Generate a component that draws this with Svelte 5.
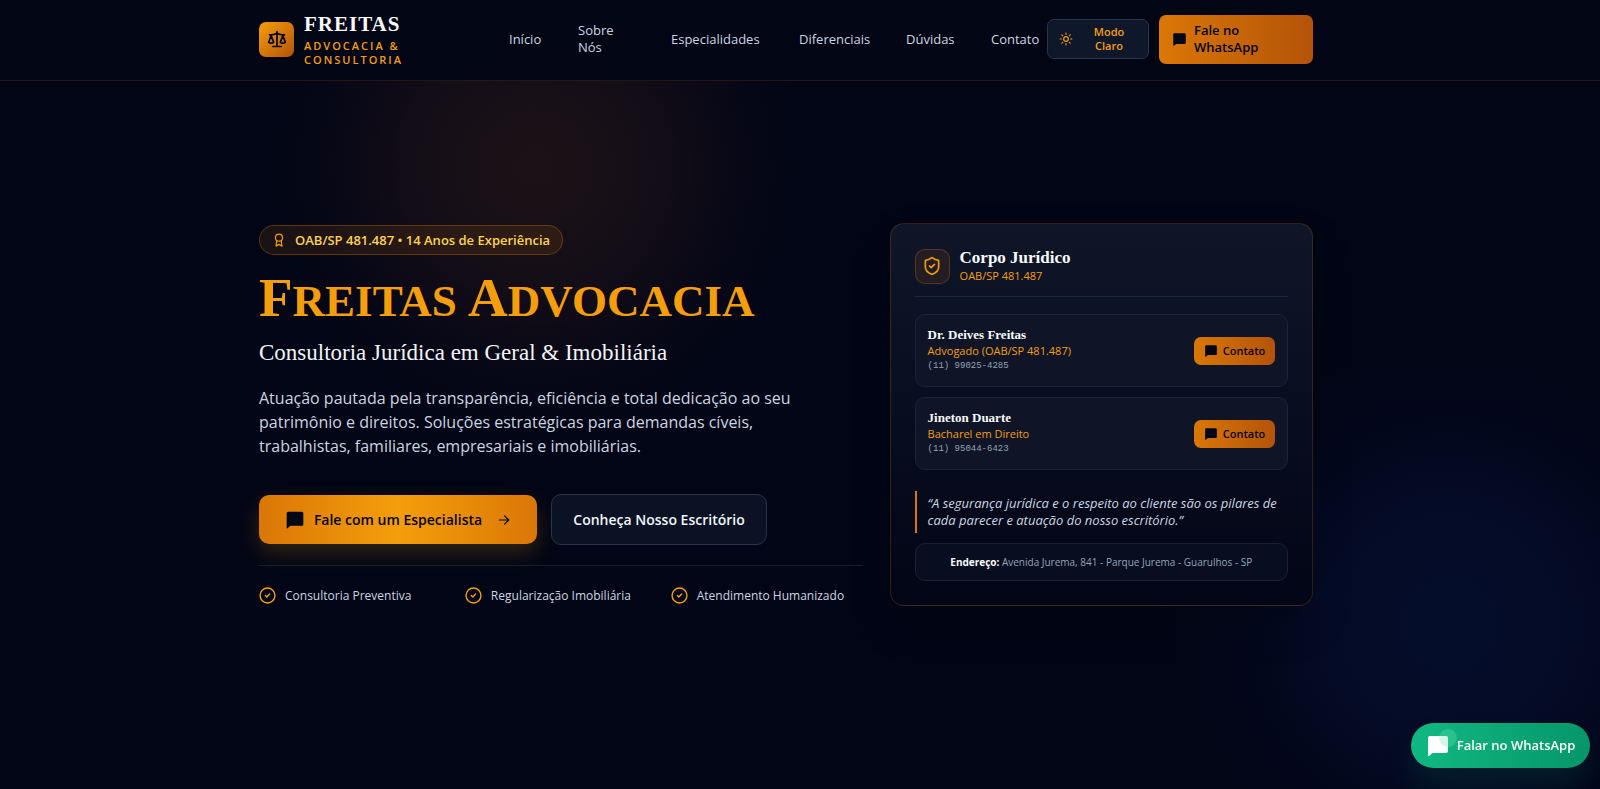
<script>
  const nav = [
    ['Início', '#inicio'],
    ['Sobre Nós', '#sobre'],
    ['Especialidades', '#especialidades'],
    ['Diferenciais', '#diferenciais'],
    ['Dúvidas', '#duvidas'],
    ['Contato', '#contato'],
  ];
  const features = ['Consultoria Preventiva', 'Regularização Imobiliária', 'Atendimento Humanizado'];
  const team = [
    { name: 'Dr. Deives Freitas', role: 'Advogado (OAB/SP 481.487)', phone: '(11) 99025-4285' },
    { name: 'Jineton Duarte', role: 'Bacharel em Direito', phone: '(11) 95044-6423' },
  ];
</script>

{#snippet chat(size)}
  <svg width={size} height={size} viewBox="0 0 24 24" fill="currentColor" aria-hidden="true">
    <path d="M20 2H4c-1.100 0-2 .9-2 2v17.500c0 .6.7.9 1.100.5L6.500 19H20c1.100 0 2-.9 2-2V4c0-1.100-.9-2-2-2z" />
  </svg>
{/snippet}

<div class="page">
  <div class="glow warm"></div>
  <div class="glow cool"></div>

  <header>
    <div class="wrap bar">
      <a class="brand" href="#inicio">
        <span class="mark">
          <svg width="20" height="20" viewBox="0 0 24 24" fill="none" stroke="currentColor" stroke-width="2" stroke-linecap="round" stroke-linejoin="round" aria-hidden="true">
            <path d="m16 16 3-8 3 8c-.87.65-1.920 1-3 1s-2.130-.35-3-1Z" />
            <path d="m2 16 3-8 3 8c-.87.65-1.920 1-3 1s-2.130-.35-3-1Z" />
            <path d="M7 21h10M12 3v18M3 7h2c2 0 5-1 7-2 2 1 5 2 7 2h2" />
          </svg>
        </span>
        <span class="brand-text">
          <span class="brand-name">FREITAS</span>
          <span class="brand-sub">ADVOCACIA &amp; CONSULTORIA</span>
        </span>
      </a>
      <nav>
        {#each nav as [label, href]}
          <a {href}>{label}</a>
        {/each}
      </nav>
      <div class="actions">
        <button class="theme" type="button">
          <svg width="14" height="14" viewBox="0 0 24 24" fill="none" stroke="currentColor" stroke-width="2" stroke-linecap="round" aria-hidden="true">
            <circle cx="12" cy="12" r="4" />
            <path d="M12 2v2M12 20v2M4.930 4.930l1.410 1.410M17.660 17.660l1.410 1.410M2 12h2M20 12h2M6.340 17.660l-1.410 1.410M19.070 4.930l-1.410 1.410" />
          </svg>
          <span>Modo Claro</span>
        </button>
        <a class="talk" href="#contato">{@render chat(15)}<span>Fale no WhatsApp</span></a>
      </div>
    </div>
  </header>

  <main class="wrap hero">
    <section class="intro">
      <p class="pill">
        <svg width="14" height="14" viewBox="0 0 24 24" fill="none" stroke="currentColor" stroke-width="2" stroke-linecap="round" stroke-linejoin="round" aria-hidden="true">
          <circle cx="12" cy="8" r="6" />
          <path d="m8 13-1 9.500 5-3 5 3-1-9.500" />
        </svg>
        OAB/SP 481.487 • 14 Anos de Experiência
      </p>
      <h1><b>F</b>reitas <b>A</b>dvocacia</h1>
      <h2>Consultoria Jurídica em Geral &amp; Imobiliária</h2>
      <p class="lead">
        Atuação pautada pela transparência, eficiência e total dedicação ao seu patrimônio e direitos. Soluções estratégicas para demandas cíveis, trabalhistas, familiares, empresariais e imobiliárias.
      </p>
      <div class="cta">
        <a class="primary" href="#contato">
          {@render chat(20)}
          <span>Fale com um Especialista</span>
          <svg class="arrow" width="14" height="14" viewBox="0 0 24 24" fill="none" stroke="currentColor" stroke-width="2" stroke-linecap="round" stroke-linejoin="round" aria-hidden="true">
            <path d="M4 12h16M13 5l7 7-7 7" />
          </svg>
        </a>
        <a class="secondary" href="#sobre">Conheça Nosso Escritório</a>
      </div>
      <ul class="features">
        {#each features as f}
          <li>
            <svg width="17" height="17" viewBox="0 0 24 24" fill="none" stroke="currentColor" stroke-width="2" stroke-linecap="round" stroke-linejoin="round" aria-hidden="true">
              <circle cx="12" cy="12" r="10.500" />
              <path d="m9 12 2 2 4-4" />
            </svg>
            {f}
          </li>
        {/each}
      </ul>
    </section>

    <aside class="card">
      <div class="card-head">
        <span class="shield">
          <svg width="20" height="20" viewBox="0 0 24 24" fill="none" stroke="currentColor" stroke-width="2" stroke-linecap="round" stroke-linejoin="round" aria-hidden="true">
            <path d="M20 13c0 5-3.500 7.500-7.660 8.950a1 1 0 0 1-.67-.01C7.500 20.500 4 18 4 13V6a1 1 0 0 1 1-1c2 0 4.500-1.200 6.240-2.720a1.170 1.170 0 0 1 1.520 0C14.510 3.810 17 5 19 5a1 1 0 0 1 1 1z" />
            <path d="m9 12 2 2 4-4" />
          </svg>
        </span>
        <div>
          <h3>Corpo Jurídico</h3>
          <p>OAB/SP 481.487</p>
        </div>
      </div>
      <div class="team">
        {#each team as m}
          <div class="member">
            <div>
              <h4>{m.name}</h4>
              <p class="role">{m.role}</p>
              <p class="phone">{m.phone}</p>
            </div>
            <a class="contact" href="#contato">{@render chat(14)}Contato</a>
          </div>
        {/each}
      </div>
      <blockquote>“A segurança jurídica e o respeito ao cliente são os pilares de cada parecer e atuação do nosso escritório.”</blockquote>
      <p class="address"><strong>Endereço:</strong> Avenida Jurema, 841 - Parque Jurema - Guarulhos - SP</p>
    </aside>
  </main>

  <a class="float" href="#contato"><span class="float-icon">{@render chat(24)}<i></i></span>Falar no WhatsApp</a>
</div>

<style>
  :global(body) {
    margin: 0;
    background: #020617;
  }
  .page {
    position: relative;
    min-height: 100vh;
    overflow: hidden;
    background: #020515;
    color: #cbd5e1;
    font-family: "Open Sans", sans-serif;
    font-size: 13px;
    line-height: 17px;
  }
  .page * {
    box-sizing: border-box;
  }
  h1, h2, h3, h4, p, ul, blockquote {
    margin: 0;
    padding: 0;
  }
  a {
    color: inherit;
    text-decoration: none;
  }
  svg {
    flex: none;
    display: block;
  }
  .glow {
    position: absolute;
    border-radius: 50%;
  }
  .warm {
    left: 265px;
    top: -103px;
    width: 540px;
    height: 540px;
    background: radial-gradient(closest-side, rgba(245, 140, 30, 0.1), rgba(220, 110, 40, 0.08) 45%, rgba(180, 83, 70, 0.03) 75%, transparent);
  }
  .cool {
    right: -130px;
    top: 343px;
    width: 560px;
    height: 560px;
    background: radial-gradient(closest-side, rgba(20, 70, 180, 0.14), rgba(20, 60, 180, 0.1) 45%, rgba(20, 50, 180, 0.03) 75%, transparent);
  }
  .wrap {
    width: min(1054px, 100% - 76px);
    margin: 0 auto;
    position: relative;
    right: 14px;
  }
  header {
    position: relative;
    background: rgba(2, 5, 20, 0.95);
    border-bottom: 1px solid rgba(245, 120, 11, 0.15);
  }
  .bar {
    display: flex;
    align-items: center;
    min-height: 80px;
    padding-bottom: 2px;
  }
  .brand {
    display: flex;
    align-items: center;
    gap: 10px;
    width: 250px;
  }
  .mark {
    display: grid;
    place-items: center;
    width: 35px;
    height: 35px;
    border-radius: 7px;
    background: linear-gradient(135deg, #f59e0b, #b45309);
    color: #020617;
  }
  .brand-text {
    width: 110px;
  }
  .brand-name {
    display: block;
    color: #f8fafc;
    font: 700 21px/24px "Liberation Serif", serif;
    letter-spacing: 1px;
    margin-bottom: 3px;
  }
  .brand-sub {
    display: block;
    color: #f59e0b;
    font-size: 11px;
    font-weight: 600;
    line-height: 14px;
    letter-spacing: 2px;
  }
  nav {
    display: grid;
    grid-template-columns: 69px 93px 128px 107px 85px auto;
    align-items: center;
    font-weight: 500;
  }
  nav a:nth-child(2) {
    width: 54px;
  }
  .actions {
    display: flex;
    align-items: center;
    gap: 10px;
    margin-left: auto;
  }
  .theme {
    display: flex;
    align-items: center;
    gap: 8px;
    width: 102px;
    height: 40px;
    padding: 0 11px;
    border: 1px solid #273449;
    border-radius: 7px;
    background: #0f172a;
    color: #f59e0b;
    font: 600 11px/14px "Open Sans", sans-serif;
  }
  .theme span {
    flex: 1;
    padding: 0 8px;
  }
  .talk {
    display: flex;
    align-items: center;
    gap: 7px;
    width: 154px;
    height: 49px;
    padding: 0 13px;
    border-radius: 7px;
    background: linear-gradient(90deg, #d97706, #b45309);
    color: #020617;
    font-weight: 600;
  }
  .hero {
    display: grid;
    grid-template-columns: repeat(12, 1fr);
    column-gap: 27px;
    align-items: center;
    padding: 142px 0;
  }
  .intro {
    grid-column: span 7;
  }
  .pill {
    display: inline-flex;
    align-items: center;
    gap: 9px;
    height: 30px;
    padding: 0 12px;
    border: 1px solid rgba(245, 140, 11, 0.28);
    border-radius: 15px;
    background: rgba(245, 140, 11, 0.1);
    color: #fcd34d;
    font-weight: 600;
  }
  .pill svg {
    color: #f59e0b;
  }
  h1 {
    margin-top: 13px;
    color: #f59e0b;
    font: 700 45px/60px "Liberation Serif", serif;
    text-transform: uppercase;
    white-space: nowrap;
  }
  h1 b {
    font-size: 55px;
  }
  h2 {
    margin-top: 7px;
    color: #f1f5f9;
    font: 400 23px/30px "Liberation Serif", serif;
  }
  .lead {
    max-width: 550px;
    margin-top: 18px;
    font-size: 16px;
    line-height: 24px;
  }
  .cta {
    display: flex;
    align-items: center;
    gap: 14px;
    margin-top: 36px;
    font-size: 14px;
    font-weight: 600;
  }
  .primary {
    display: flex;
    align-items: center;
    justify-content: center;
    gap: 9px;
    width: 278px;
    height: 49px;
    border-radius: 10px;
    background: linear-gradient(90deg, #d97706, #f59e0b 50%, #d97706);
    box-shadow: 0 9px 22px rgba(245, 158, 11, 0.2);
    color: #020617;
  }
  .arrow {
    margin-left: 6px;
  }
  .secondary {
    display: grid;
    place-items: center;
    width: 216px;
    height: 51px;
    border: 1px solid #273449;
    border-radius: 10px;
    background: #0b1224;
    color: #f1f5f9;
  }
  .features {
    display: grid;
    grid-template-columns: repeat(3, 1fr);
    gap: 14px;
    margin-top: 20px;
    padding-top: 21px;
    border-top: 1px solid #161d2d;
    font-size: 12px;
    list-style: none;
  }
  .features li {
    display: flex;
    align-items: center;
    gap: 9px;
    white-space: nowrap;
  }
  .features svg {
    color: #f59e0b;
  }
  .card {
    grid-column: span 5;
    padding: 24px;
    border: 1px solid rgba(245, 120, 11, 0.2);
    border-radius: 14px;
    background: linear-gradient(180deg, #0e1628, #020516);
    box-shadow: 0 20px 40px rgba(0, 0, 0, 0.2);
  }
  .card-head {
    display: flex;
    align-items: center;
    gap: 10px;
    padding-bottom: 12px;
    border-bottom: 1px solid #1b273a;
  }
  .shield {
    display: grid;
    place-items: center;
    width: 35px;
    height: 35px;
    border: 1px solid rgba(245, 120, 11, 0.25);
    border-radius: 10px;
    background: rgba(245, 120, 11, 0.1);
    color: #f59e0b;
  }
  h3 {
    color: #f8fafc;
    font: 700 17px/20px "Liberation Serif", serif;
  }
  .card-head p, .role {
    color: #f59e0b;
    font-size: 11px;
    line-height: 16px;
  }
  .team {
    display: grid;
    gap: 10px;
    margin-top: 17px;
  }
  .member {
    display: flex;
    align-items: center;
    justify-content: space-between;
    min-height: 73px;
    padding: 0 12px;
    border: 1px solid #1a2436;
    border-radius: 10px;
    background: #0f1526;
  }
  h4 {
    color: #f8fafc;
    font: 700 13px/16px "Liberation Serif", serif;
  }
  .phone {
    color: #94a3b8;
    font: 9px/15px "Liberation Mono", monospace;
  }
  .contact {
    display: flex;
    align-items: center;
    justify-content: center;
    gap: 5px;
    width: 81px;
    height: 28px;
    border-radius: 7px;
    background: linear-gradient(90deg, #d97706, #b45309);
    color: #020617;
    font-size: 11px;
    font-weight: 600;
  }
  blockquote {
    margin-top: 21px;
    padding: 4px 0 4px 11px;
    border-left: 2px solid #d97706;
    font-style: italic;
  }
  .address {
    margin-top: 10px;
    padding: 10px;
    border: 1px solid #182234;
    border-radius: 10px;
    background: #080e1f;
    color: #94a3b8;
    font-size: 10px;
    line-height: 16px;
    text-align: center;
  }
  .address strong {
    color: #f8fafc;
  }
  .float {
    position: fixed;
    right: 10px;
    bottom: 21px;
    display: flex;
    align-items: center;
    justify-content: center;
    gap: 7px;
    width: 179px;
    height: 45px;
    border-radius: 23px;
    background: linear-gradient(90deg, #10b981, #059669);
    box-shadow: 0 18px 30px rgba(16, 185, 129, 0.12);
    color: #fff;
    font-size: 13px;
    font-weight: 600;
  }
  .float-icon {
    position: relative;
  }
  .float-icon i {
    position: absolute;
    top: -5px;
    right: -7px;
    width: 18px;
    height: 18px;
    border-radius: 50%;
    background: rgba(110, 231, 183, 0.3);
  }
</style>
